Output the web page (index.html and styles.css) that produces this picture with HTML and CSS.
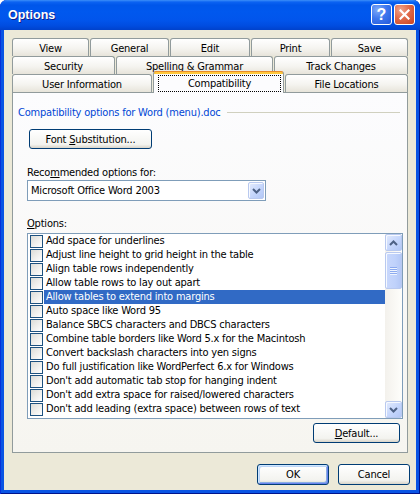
FILE: index.html
```html
<!DOCTYPE html>
<html>
<head>
<meta charset="utf-8">
<link rel="stylesheet" href="styles.css">
</head>
<body>
<div class="window">
  <div class="titlebar">
    <span class="title">Options</span>
    <span class="tbtn help">?</span>
    <span class="tbtn close"><svg width="11" height="11" viewBox="0 0 11 11"><path d="M1.5 1.5 L9.5 9.5 M9.5 1.5 L1.5 9.5" stroke="#fff" stroke-width="2.2" stroke-linecap="square"/></svg></span>
  </div>
  <div class="client">
    <div class="tabrow">
      <div class="tab t-view">View</div>
      <div class="tab t-general">General</div>
      <div class="tab t-edit">Edit</div>
      <div class="tab t-print">Print</div>
      <div class="tab t-save">Save</div>
    </div>
    <div class="tabrow">
      <div class="tab t-security">Security</div>
      <div class="tab t-spelling">Spelling &amp; Grammar</div>
      <div class="tab t-track">Track Changes</div>
    </div>
    <div class="tabrow">
      <div class="tab t-user">User Information</div>
      <div class="tab selected t-compat"><span class="focus">Compatibility</span></div>
      <div class="tab t-files">File Locations</div>
    </div>
    <div class="panel">
      <div class="group-head"><span>Compatibility options for Word (menu).doc</span></div>
      <div class="btn btn-font"><span>Font <u>S</u>ubstitution...</span></div>
      <div class="label label-rec">Reco<u>m</u>mended options for:</div>
      <div class="combo">
        <span class="combo-text">Microsoft Office Word 2003</span>
        <span class="combo-btn"><svg width="9" height="6" viewBox="0 0 9 6"><path d="M1 1 L4.5 4.5 L8 1" fill="none" stroke="#4D6185" stroke-width="2"/></svg></span>
      </div>
      <div class="label label-opt"><u>O</u>ptions:</div>
      <div class="list">
        <div class="items">
          <div class="item"><span class="chk"></span><span class="txt">Add space for underlines</span></div>
          <div class="item"><span class="chk"></span><span class="txt">Adjust line height to grid height in the table</span></div>
          <div class="item"><span class="chk"></span><span class="txt">Align table rows independently</span></div>
          <div class="item"><span class="chk"></span><span class="txt">Allow table rows to lay out apart</span></div>
          <div class="item sel"><span class="chk"></span><span class="txt">Allow tables to extend into margins</span></div>
          <div class="item"><span class="chk"></span><span class="txt">Auto space like Word 95</span></div>
          <div class="item"><span class="chk"></span><span class="txt">Balance SBCS characters and DBCS characters</span></div>
          <div class="item"><span class="chk"></span><span class="txt">Combine table borders like Word 5.x for the Macintosh</span></div>
          <div class="item"><span class="chk"></span><span class="txt">Convert backslash characters into yen signs</span></div>
          <div class="item"><span class="chk"></span><span class="txt">Do full justification like WordPerfect 6.x for Windows</span></div>
          <div class="item"><span class="chk"></span><span class="txt">Don't add automatic tab stop for hanging indent</span></div>
          <div class="item"><span class="chk"></span><span class="txt">Don't add extra space for raised/lowered characters</span></div>
          <div class="item"><span class="chk"></span><span class="txt">Don't add leading (extra space) between rows of text</span></div>
        </div>
        <div class="vscroll">
          <div class="sbtn"><svg width="9" height="6" viewBox="0 0 9 6"><path d="M1 5 L4.5 1.5 L8 5" fill="none" stroke="#4D6185" stroke-width="2"/></svg></div>
          <div class="thumb"><span class="grip"></span><span class="grip"></span><span class="grip"></span><span class="grip"></span></div>
          <div class="track"></div>
          <div class="sbtn"><svg width="9" height="6" viewBox="0 0 9 6"><path d="M1 1 L4.5 4.5 L8 1" fill="none" stroke="#4D6185" stroke-width="2"/></svg></div>
        </div>
      </div>
      <div class="btn btn-default"><span><u>D</u>efault...</span></div>
    </div>
    <div class="actions">
      <div class="btn btn-main default"><span>OK</span></div>
      <div class="btn btn-main"><span>Cancel</span></div>
    </div>
  </div>
</div>
</body>
</html>
```
FILE: styles.css
```css
* { box-sizing: border-box; }
html, body { margin: 0; padding: 0; background: #ffffff; }
body {
  font-family: "DejaVu Sans Condensed", "Liberation Sans", sans-serif;
  font-size: 11px;
  letter-spacing: -0.2px;
  color: #000;
}
u { text-decoration: underline; text-underline-offset: 1px; }

.window {
  width: 420px;
  height: 494px;
  background: #0A54E4;
  display: flex;
  flex-direction: column;
  border-radius: 7px 7px 0 0;
  overflow: hidden;
  box-shadow: inset 1px 0 #0831D9, inset -1px 0 #00138C, inset 0 -1px #00138C;
}

.titlebar {
  height: 30px;
  flex: none;
  display: flex;
  align-items: center;
  padding: 0 5px 1px 8px;
  background: linear-gradient(#3D8FF8 0, #0C63F2 2px, #0056EA 5px, #0058EE 12px, #0155EC 20px, #004CDF 26px, #0042CB 30px);
}
.title {
  flex: 1;
  color: #fff;
  font-family: "Liberation Sans", sans-serif;
  font-weight: bold;
  font-size: 12.5px;
  letter-spacing: 0;
  text-shadow: 1px 1px #0F1F8A;
  padding-top: 1px;
}
.tbtn {
  width: 21px;
  height: 21px;
  border: 1px solid #fff;
  border-radius: 3px;
  display: flex;
  align-items: center;
  justify-content: center;
  margin-left: 2px;
}
.help {
  background: radial-gradient(circle at 30% 25%, #7FAAF9 0, #3F78EE 45%, #2358DB 100%);
  color: #fff;
  font-family: "Liberation Sans", sans-serif;
  font-weight: bold;
  font-size: 16px;
  letter-spacing: 0;
  line-height: 1;
}
.close {
  background: radial-gradient(circle at 30% 25%, #F0A48C 0, #E06A4A 45%, #C8431F 100%);
}

.client {
  flex: 1;
  margin: 0 4px 4px;
  background: #ECE9D8;
  padding: 8px 8px 0;
  display: flex;
  flex-direction: column;
}

.tabrow {
  display: flex;
  height: 18px;
  gap: 1px;
  flex: none;
}
.tab {
  border: 1px solid #919B9C;
  border-bottom: none;
  border-radius: 3px 3px 0 0;
  background: linear-gradient(#FFFFFF, #F5F4F0 55%, #E7E4DA);
  display: flex;
  align-items: center;
  justify-content: center;
  padding-top: 1px;
}
.t-view { width: 77px; }
.t-general { width: 79px; }
.t-edit { width: 80px; }
.t-print { width: 79px; }
.t-save { width: 77px; }
.t-security { width: 103px; }
.t-spelling { width: 157px; }
.t-track { width: 134px; }
.t-user { width: 140px; }
.t-compat { width: 131px; }
.t-files { width: 123px; }

.tab.selected {
  margin-top: -3px;
  margin-bottom: -1px;
  position: relative;
  z-index: 1;
  border-top: 1px solid #E68B2C;
  background: linear-gradient(#FFC83C 0, #FFC83C 2px, #FCFCFE 2px);
  padding: 3px 2px 1px 4px;
  align-items: stretch;
}
.focus {
  flex: 1;
  border: 1px dotted #000;
  display: flex;
  align-items: center;
  justify-content: center;
}

.panel {
  height: 361px;
  flex: none;
  border: 1px solid #919B9C;
  background: linear-gradient(#FCFCFE, #F6F5F0);
  display: flex;
  flex-direction: column;
  align-items: flex-start;
}

.group-head {
  align-self: stretch;
  display: flex;
  align-items: center;
  height: 14px;
  margin: 12px 7px 0 5px;
  color: #0046D5;
}
.group-head::after {
  content: "";
  flex: 1;
  height: 1px;
  background: #D0D0BF;
  margin-left: 6px;
}

.btn {
  border: 1px solid #003C74;
  border-radius: 3px;
  background: linear-gradient(#FFFFFF, #F3F3EF 80%, #D8D4C9);
  display: flex;
  align-items: center;
  justify-content: center;
}
.btn-font {
  width: 123px;
  height: 20px;
  margin: 10px 0 0 16px;
}
.label {
  height: 13px;
  line-height: 13px;
  margin-left: 14px;
}
.label-rec { margin-top: 17px; }
.label-opt { margin-top: 16px; }

.combo {
  width: 239px;
  height: 21px;
  margin: 1px 0 0 14px;
  border: 1px solid #7F9DB9;
  background: #fff;
  display: flex;
  align-items: center;
  padding: 1px 1px 1px 3px;
}
.combo-text { flex: 1; }
.combo-btn, .sbtn {
  width: 16px;
  height: 17px;
  border: 1px solid #B9C9EF;
  border-radius: 2px;
  background: linear-gradient(135deg, #E3EBFD, #C5D6FC 55%, #B2C7F6);
  box-shadow: inset 1px 1px #F6F9FF;
  display: flex;
  align-items: center;
  justify-content: center;
}

.list {
  width: 376px;
  height: 186px;
  margin: 3px 0 0 14px;
  border: 1px solid #7F9DB9;
  background: #fff;
  display: flex;
}
.items {
  flex: 1;
  display: flex;
  flex-direction: column;
}
.item {
  height: 14px;
  display: flex;
  align-items: center;
  padding-left: 2px;
}
.chk {
  width: 13px;
  height: 13px;
  border: 1px solid #1C5180;
  background: linear-gradient(135deg, #DCDCD7, #FFFFFF);
  margin-right: 1px;
  flex: none;
}
.txt {
  flex: 1;
  height: 14px;
  line-height: 14px;
  padding-left: 2px;
  white-space: nowrap;
}
.item.sel .txt {
  background: #316AC5;
  color: #fff;
}

.vscroll {
  width: 17px;
  display: flex;
  flex-direction: column;
  background: linear-gradient(to right, #F3F1EC, #FEFEFB);
}
.sbtn { width: 17px; flex: none; }
.thumb {
  height: 37px;
  margin-top: 1px;
  border: 1px solid #B9C9EF;
  border-radius: 2px;
  background: linear-gradient(to right, #C9D8FC, #C0D2FB 60%, #B4C8F6);
  box-shadow: inset 1px 1px #F6F9FF;
  display: flex;
  flex-direction: column;
  align-items: center;
  justify-content: center;
  gap: 1px;
}
.grip {
  width: 7px;
  height: 1px;
  background: #8CAAEF;
  box-shadow: 0 1px #EEF4FE;
}
.track { flex: 1; }

.btn-default {
  width: 87px;
  height: 20px;
  margin: 4px 7px 0 0;
  align-self: flex-end;
}

.actions {
  display: flex;
  justify-content: flex-end;
  gap: 9px;
  margin: 11px -2px 0 0;
}
.btn-main {
  width: 72px;
  height: 21px;
}
.btn-main.default {
  box-shadow: inset 1px 1px #CEE7FF, inset -1px -1px #6982EE, inset 2px 2px #BCD4F6, inset -2px -2px #89ADE4;
}
```
